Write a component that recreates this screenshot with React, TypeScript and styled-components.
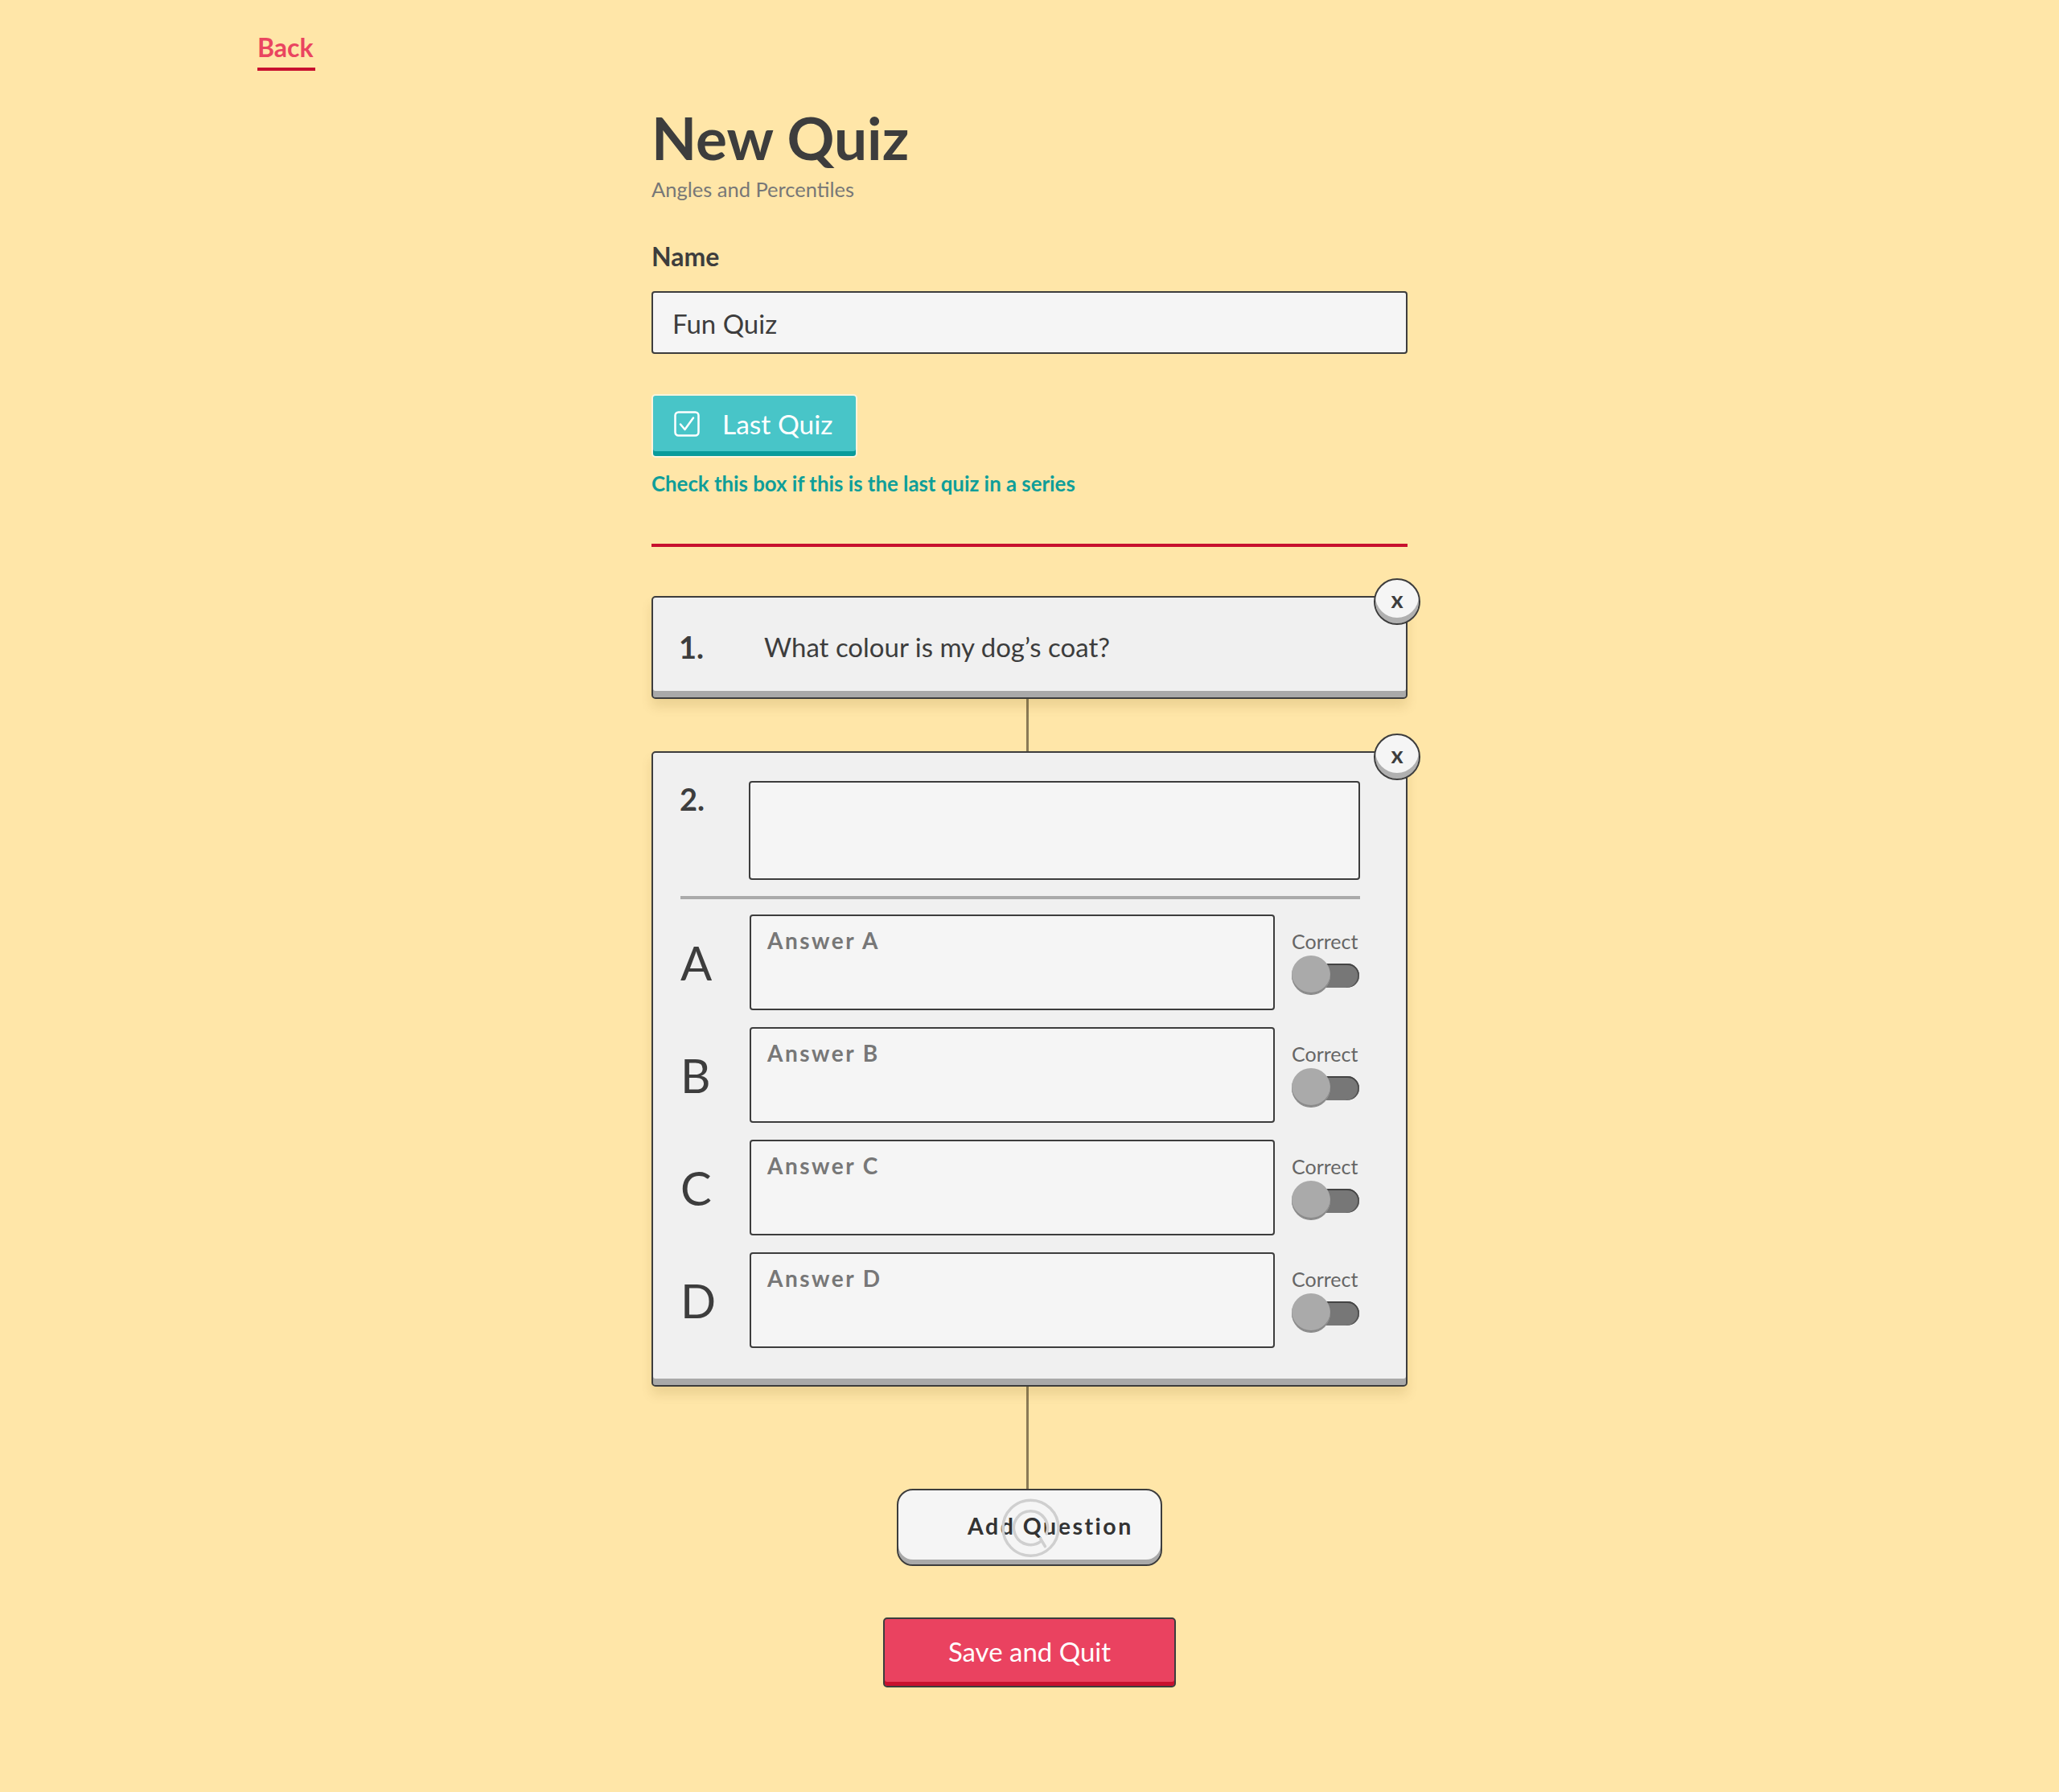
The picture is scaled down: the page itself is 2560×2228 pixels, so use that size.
import React from "react";
import styled, { createGlobalStyle } from "styled-components";

const GlobalStyle = createGlobalStyle`
  html, body {
    margin: 0;
    padding: 0;
    background: #ffe6a8;
    min-height: 100%;
  }
  body {
    font-family: "Lato", "Noto Sans", sans-serif;
    color: #3d3d3d;
  }
  * { box-sizing: border-box; }
`;

const Page = styled.div`
  width: 1920px;
  margin: 0 auto;
  padding-top: 39px;
  padding-bottom: 120px;
`;

const BackLink = styled.a`
  display: inline-block;
  font-size: 32px;
  line-height: 40px;
  font-weight: 700;
  color: #ea4560;
  text-decoration: none;
  padding: 0 2px 5px 0;
  border-bottom: 4px solid #c8102e;
  cursor: pointer;
`;

const Column = styled.main`
  width: 940px;
  margin: 43px auto 0;
  display: flex;
  flex-direction: column;
`;

const Title = styled.h1`
  margin: 0;
  font-size: 73px;
  line-height: 80px;
  font-weight: 700;
  color: #3d3d3d;
`;

const Subtitle = styled.div`
  margin-top: 9px;
  font-size: 25.5px;
  line-height: 30px;
  color: #777;
`;

const FieldLabel = styled.label`
  margin-top: 50px;
  font-size: 32px;
  line-height: 38px;
  font-weight: 700;
  color: #3d3d3d;
`;

const TextInput = styled.input`
  margin-top: 24px;
  height: 78px;
  width: 100%;
  border: 2px solid #3d3d3d;
  border-radius: 4px;
  background: #f5f5f5;
  padding: 2px 24px 0;
  font-family: inherit;
  font-size: 33px;
  color: #3d3d3d;
  outline: none;
`;

const ToggleButton = styled.button`
  margin-top: 50px;
  align-self: flex-start;
  display: flex;
  align-items: center;
  gap: 28px;
  width: 256px;
  height: 79px;
  padding: 0 0 6px 26px;
  background: #48c5c8;
  border: 2px solid #fff4dc;
  border-radius: 5px;
  box-shadow: inset 0 -6px 0 #0a9b9b;
  color: #fff;
  font-family: inherit;
  font-size: 33.5px;
  cursor: pointer;
`;

const HelpText = styled.p`
  margin: 17px 0 0;
  font-size: 25.8px;
  line-height: 30px;
  font-weight: 700;
  color: #0f9e99;
`;

const RedRule = styled.hr`
  margin: 60px 0 0;
  border: none;
  height: 4px;
  background: #c8102e;
`;

const Cards = styled.section`
  margin-top: 61px;
  display: flex;
  flex-direction: column;
  align-items: stretch;
`;

const Connector = styled.div<{ $h: number }>`
  width: 3px;
  height: ${(p) => p.$h}px;
  margin-left: calc(50% - 4px);
  background: #8a7a55;
`;

const Card = styled.div`
  position: relative;
  background: #f0f0f0;
  border: 2px solid #3d3d3d;
  border-radius: 5px;
  box-shadow: inset 0 -8px 0 #a9a9a9, 0 10px 14px rgba(120, 90, 20, 0.14);
`;

const CollapsedCard = styled(Card)`
  height: 128px;
  display: flex;
  align-items: center;
  padding: 0 30px 2px 32px;
`;

const ExpandedCard = styled(Card)`
  padding: 35px 57px 46px 33px;
`;

const Number = styled.div`
  width: 87px;
  flex: none;
  font-size: 38px;
  line-height: 44px;
  font-weight: 700;
  color: #3d3d3d;
`;

const QuestionText = styled.div`
  padding-left: 19px;
  font-size: 33px;
  color: #3d3d3d;
`;

const CloseButton = styled.button`
  position: absolute;
  top: -24px;
  right: -18px;
  width: 58px;
  height: 58px;
  border-radius: 50%;
  border: 2px solid #3d3d3d;
  background: #f5f5f5;
  box-shadow: inset 0 -7px 0 #b0b0b0;
  display: flex;
  align-items: center;
  justify-content: center;
  padding: 0 0 7px;
  font-family: inherit;
  font-size: 29px;
  font-weight: 700;
  line-height: 1;
  color: #3d3d3d;
  cursor: pointer;
`;

const QuestionRow = styled.div`
  display: grid;
  grid-template-columns: 86px 1fr;
  align-items: start;
`;

const Field = styled.textarea<{ $h: number }>`
  display: block;
  width: 100%;
  height: ${(p) => p.$h}px;
  resize: none;
  border: 2px solid #3d3d3d;
  border-radius: 4px;
  background: #f5f5f5;
  padding: 13px 20px;
  font-family: inherit;
  font-size: 28px;
  font-weight: 700;
  letter-spacing: 2.5px;
  color: #3d3d3d;
  outline: none;
  &::placeholder {
    color: #777;
  }
`;

const Divider = styled.div`
  margin: 20px 0 0 1px;
  height: 4px;
  background: #aaa;
`;

const Answers = styled.div`
  margin-top: 19px;
  display: flex;
  flex-direction: column;
  gap: 21px;
`;

const AnswerRow = styled.div`
  display: grid;
  grid-template-columns: 66px 653px 1fr;
  column-gap: 21px;
  height: 119px;
`;

const Letter = styled.div`
  align-self: center;
  padding-left: 1px;
  font-size: 58px;
  line-height: 64px;
  color: #3d3d3d;
`;

const CorrectCol = styled.div`
  display: flex;
  flex-direction: column;
  align-items: flex-start;
  gap: 4px;
  padding-top: 19px;
`;

const CorrectLabel = styled.div`
  font-size: 25px;
  line-height: 28px;
  color: #666;
`;

const Switch = styled.div`
  position: relative;
  width: 84px;
  height: 48px;
`;

const Track = styled.div`
  position: absolute;
  right: 0;
  top: 10px;
  width: 60px;
  height: 30px;
  border-radius: 0 15px 15px 0;
  background: #777;
  box-shadow: inset 0 2px 0 #444, inset -2px 0 0 #555;
`;

const Knob = styled.div`
  position: absolute;
  left: 0;
  top: 0;
  width: 48px;
  height: 48px;
  border-radius: 50%;
  background: #aaa;
  box-shadow: inset 0 -2px 0 #8a8a8a, 0 1px 0 #888;
`;

const AddButton = styled.button`
  position: relative;
  align-self: center;
  width: 330px;
  height: 96px;
  border: 2px solid #3d3d3d;
  border-radius: 20px;
  background: #f5f5f5;
  box-shadow: inset 0 -6px 0 #a9a9a9;
  padding: 0 0 4px 86px;
  text-align: left;
  font-family: inherit;
  font-size: 28.5px;
  font-weight: 700;
  letter-spacing: 2.5px;
  color: #333;
  cursor: pointer;
`;

const Ripple = styled.svg`
  position: absolute;
  left: 50%;
  top: 50%;
  transform: translate(-48%, -49%);
  pointer-events: none;
`;

const SaveButton = styled.button`
  margin-top: 64px;
  align-self: center;
  width: 364px;
  height: 87px;
  border: 2px solid #3d3d3d;
  border-radius: 5px;
  background: #ea4260;
  box-shadow: inset 0 -5px 0 #c8102e;
  padding: 0 0 4px;
  font-family: inherit;
  font-size: 33px;
  color: #fff;
  cursor: pointer;
`;

const CheckIcon = () => (
  <svg width="32" height="32" viewBox="0 0 32 32" fill="none">
    <rect x="1.5" y="1.5" width="29" height="29" rx="4" stroke="#fff" strokeWidth="2.5" />
    <path d="M8 16.5 L13.5 23 L24 8.5" stroke="#fff" strokeWidth="2.5" strokeLinecap="round" strokeLinejoin="round" />
  </svg>
);

const answers = ["A", "B", "C", "D"];

export default function App() {
  return (
    <>
      <GlobalStyle />
      <Page>
        <BackLink>Back</BackLink>
        <Column>
          <Title>New Quiz</Title>
          <Subtitle>Angles and Percentiles</Subtitle>
          <FieldLabel>Name</FieldLabel>
          <TextInput defaultValue="Fun Quiz" />
          <ToggleButton>
            <CheckIcon />
            <span>Last Quiz</span>
          </ToggleButton>
          <HelpText>Check this box if this is the last quiz in a series</HelpText>
          <RedRule />
          <Cards>
            <CollapsedCard>
              <Number>1.</Number>
              <QuestionText>What colour is my dog’s coat?</QuestionText>
              <CloseButton>x</CloseButton>
            </CollapsedCard>
            <Connector $h={65} />
            <ExpandedCard>
              <CloseButton>x</CloseButton>
              <QuestionRow>
                <Number>2.</Number>
                <Field $h={123} />
              </QuestionRow>
              <Divider />
              <Answers>
                {answers.map((l) => (
                  <AnswerRow key={l}>
                    <Letter>{l}</Letter>
                    <Field $h={119} placeholder={`Answer ${l}`} />
                    <CorrectCol>
                      <CorrectLabel>Correct</CorrectLabel>
                      <Switch>
                        <Track />
                        <Knob />
                      </Switch>
                    </CorrectCol>
                  </AnswerRow>
                ))}
              </Answers>
            </ExpandedCard>
            <Connector $h={127} />
            <AddButton>
              Add Question
              <Ripple width="74" height="74" viewBox="0 0 74 74" fill="none">
                <circle cx="37" cy="37" r="34.5" stroke="#cfcfcf" strokeWidth="3.5" />
                <path
                  d="M49.9 53.5 A21 21 0 1 1 56.7 44.2"
                  stroke="#cfcfcf"
                  strokeWidth="3.5"
                  strokeLinecap="round"
                />
                <path d="M49 50 L55 60" stroke="#cfcfcf" strokeWidth="3.5" strokeLinecap="round" />
              </Ripple>
            </AddButton>
            <SaveButton>Save and Quit</SaveButton>
          </Cards>
        </Column>
      </Page>
    </>
  );
}
